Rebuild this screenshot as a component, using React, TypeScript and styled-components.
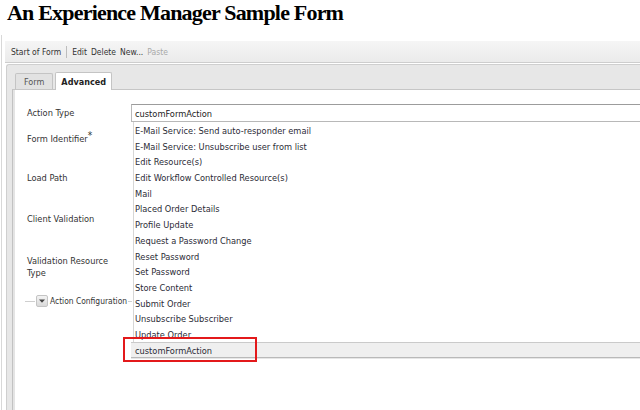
import React from "react";
import styled, { createGlobalStyle } from "styled-components";

const uiFont = `"DejaVu Sans Condensed", "DejaVu Sans", sans-serif`;

const GlobalStyle = createGlobalStyle`
  html, body {
    margin: 0;
    padding: 0;
    background: #fff;
  }
  body {
    width: 640px;
    height: 410px;
    overflow: hidden;
  }
`;

const Page = styled.div`
  width: 640px;
  height: 410px;
  overflow: hidden;
  display: flex;
  flex-direction: column;
`;

const Title = styled.h1`
  margin: 0 0 0 7px;
  font: bold 22px/25px "Liberation Serif", "Times New Roman", serif;
  letter-spacing: -0.8px;
  color: #000;
  white-space: nowrap;
`;

const Workspace = styled.div`
  flex: 1;
  width: 680px;
  margin: 10px 0 0 1px;
  padding: 6px 0 0 3px;
  border-left: 1px solid #d8d8d8;
  display: flex;
  flex-direction: column;
`;

const Toolbar = styled.div`
  display: flex;
  align-items: center;
  gap: 4px;
  padding: 1px 0 0 6px;
  box-sizing: border-box;
  height: 22px;
  background: linear-gradient(#f5f5f5, #ebebeb);
  border-bottom: 1px solid #cdcdcd;
  font: 8.5px ${uiFont};
  color: #333;
`;

const ToolButton = styled.span<{ $disabled?: boolean }>`
  color: ${(p) => (p.$disabled ? "#a9a9a9" : "#333")};
  white-space: nowrap;
`;

const ToolSeparator = styled.span`
  width: 1px;
  height: 12px;
  margin: 0 1px;
  background: #bdbdbd;
`;

const TabPanel = styled.div`
  flex: 1;
  margin: 1px 0 0 1px;
  background: #e7e7e7;
  border: 1px solid #cfcfcf;
  border-right: none;
  border-bottom: none;
  border-radius: 3px 0 0 0;
  display: flex;
  flex-direction: column;
`;

const TabStrip = styled.div`
  height: 24px;
  display: flex;
  align-items: flex-end;
  gap: 2px;
  padding-left: 8px;
`;

const Tab = styled.div<{ $active?: boolean }>`
  height: ${(p) => (p.$active ? 18 : 16)}px;
  margin-bottom: ${(p) => (p.$active ? -1 : 0)}px;
  padding: 1px ${(p) => (p.$active ? 5 : 8)}px 0;
  box-sizing: border-box;
  display: flex;
  align-items: center;
  border: 1px solid #c4c4c4;
  border-bottom: none;
  border-radius: 2px 2px 0 0;
  background: ${(p) => (p.$active ? "#fff" : "#e2e2e2")};
  font: ${(p) => (p.$active ? "bold" : "normal")} 9px ${uiFont};
  color: ${(p) => (p.$active ? "#222" : "#555")};
  position: relative;
  z-index: 1;
`;

const TabBody = styled.div`
  flex: 1;
  margin-left: 5px;
  padding: 14px 0 0 14px;
  background: #fff;
  border-top: 1px solid #c6c6c6;
  border-left: 1px solid #c2c2c2;
  box-shadow: inset 2px 0 0 #e4e4e4;
  font: 9.2px ${uiFont};
  color: #333;
`;

const FieldRow = styled.div<{ $height: number; $gap?: number }>`
  display: grid;
  grid-template-columns: 104px 1fr;
  height: ${(p) => p.$height}px;
  margin-top: ${(p) => p.$gap ?? 0}px;
`;

const Label = styled.div<{ $lineHeight: number }>`
  padding-top: 1px;
  line-height: ${(p) => p.$lineHeight}px;
  white-space: pre-line;
`;

const Required = styled.sup`
  font-size: 10px;
  line-height: 0;
  vertical-align: 3px;
`;

const FieldCell = styled.div`
  position: relative;
`;

const TextField = styled.div`
  box-sizing: border-box;
  height: 18px;
  padding: 1px 0 0 3px;
  line-height: 15px;
  border: 1px solid #b8b8b8;
  border-top-color: #9c9c9c;
  background: #fff;
  color: #222;
`;

const OptionList = styled.ul`
  position: absolute;
  top: 100%;
  left: 2px;
  right: 0;
  margin: 0;
  padding: 0;
  list-style: none;
  background: #fff;
  border-left: 1px solid #d6d6d6;
  z-index: 5;
`;

const Option = styled.li<{ $selected?: boolean }>`
  position: relative;
  height: 13.7px;
  padding-top: 2px;
  line-height: 13.7px;
  padding-left: ${(p) => (p.$selected ? 4 : 1)}px;
  margin-left: ${(p) => (p.$selected ? -3 : 0)}px;
  color: #2b2b36;
  white-space: nowrap;
  background: ${(p) => (p.$selected ? "#efefef" : "transparent")};
  box-shadow: ${(p) =>
    p.$selected
      ? "inset 0 1px 0 #cacaca, 0 1px 0 #b9b9b9, 0 2px 0 #e6e6e6"
      : "none"};
`;

const Callout = styled.span`
  position: absolute;
  left: -8px;
  top: -5px;
  width: 134px;
  height: 25px;
  box-sizing: border-box;
  border: 2px solid #e3191b;
  pointer-events: none;
`;

const ConfigRow = styled.div`
  display: flex;
  align-items: center;
  height: 16px;
  padding-top: 1px;
  margin: 0 0 0 -2px;
  width: 106px;
`;

const Rule = styled.span<{ $width: number }>`
  width: ${(p) => p.$width}px;
  height: 1px;
  background: #cfcfcf;
  flex-shrink: 0;
`;

const Toggle = styled.span`
  width: 12px;
  height: 12px;
  box-sizing: border-box;
  margin: 0 2px 0 1px;
  display: flex;
  align-items: center;
  justify-content: center;
  border: 1px solid #c4c4c4;
  border-radius: 2px;
  background: linear-gradient(#f3f3f3, #d9d9d9);
  flex-shrink: 0;
`;

const ConfigLabel = styled.span`
  font-size: 8.4px;
  white-space: nowrap;
  margin-right: 1px;
`;

const actions = [
  "E-Mail Service: Send auto-responder email",
  "E-Mail Service: Unsubscribe user from list",
  "Edit Resource(s)",
  "Edit Workflow Controlled Resource(s)",
  "Mail",
  "Placed Order Details",
  "Profile Update",
  "Request a Password Change",
  "Reset Password",
  "Set Password",
  "Store Content",
  "Submit Order",
  "Unsubscribe Subscriber",
  "Update Order",
  "customFormAction",
];

const selectedAction = "customFormAction";

export default function App() {
  return (
    <Page>
      <GlobalStyle />
      <Title>An Experience Manager Sample Form</Title>
      <Workspace>
        <Toolbar>
          <ToolButton>Start of Form</ToolButton>
          <ToolSeparator />
          <ToolButton>Edit</ToolButton>
          <ToolButton>Delete</ToolButton>
          <ToolButton>New...</ToolButton>
          <ToolButton $disabled>Paste</ToolButton>
        </Toolbar>
        <TabPanel>
          <TabStrip>
            <Tab>Form</Tab>
            <Tab $active>Advanced</Tab>
          </TabStrip>
          <TabBody>
            <FieldRow $height={18}>
              <Label $lineHeight={16}>Action Type</Label>
              <FieldCell>
                <TextField>{selectedAction}</TextField>
                <OptionList>
                  {actions.map((a) => (
                    <Option key={a} $selected={a === selectedAction}>
                      {a}
                      {a === selectedAction && <Callout />}
                    </Option>
                  ))}
                </OptionList>
              </FieldCell>
            </FieldRow>
            <FieldRow $height={39} $gap={8}>
              <Label $lineHeight={16}>
                Form Identifier<Required>*</Required>
              </Label>
            </FieldRow>
            <FieldRow $height={41}>
              <Label $lineHeight={16}>Load Path</Label>
            </FieldRow>
            <FieldRow $height={44}>
              <Label $lineHeight={16}>Client Validation</Label>
            </FieldRow>
            <FieldRow $height={38}>
              <Label $lineHeight={12}>{"Validation Resource\nType"}</Label>
            </FieldRow>
            <ConfigRow>
              <Rule $width={10} />
              <Toggle>
                <svg width="6" height="4" viewBox="0 0 6 4">
                  <path d="M0 0.5h6L3 3.8z" fill="#444" />
                </svg>
              </Toggle>
              <ConfigLabel>Action Configuration</ConfigLabel>
              <Rule $width={4} />
            </ConfigRow>
          </TabBody>
        </TabPanel>
      </Workspace>
    </Page>
  );
}
